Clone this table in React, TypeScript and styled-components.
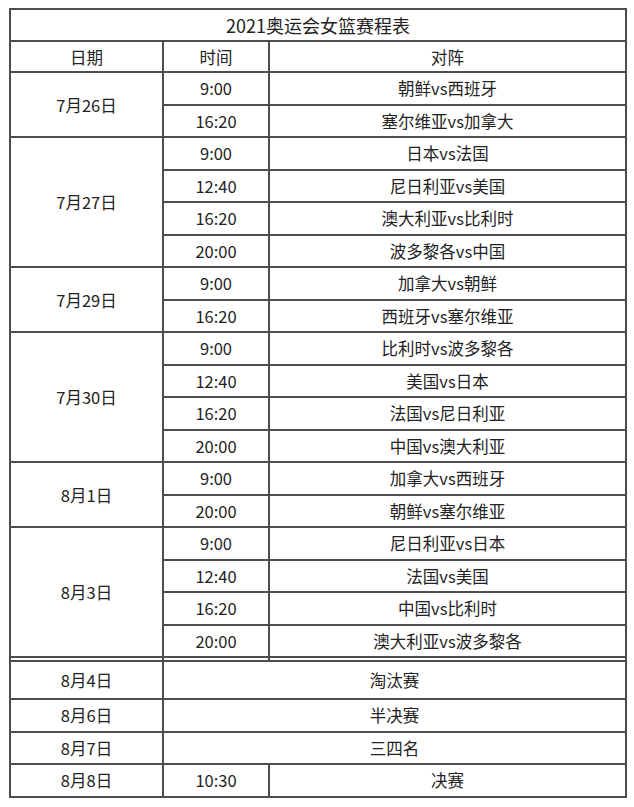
import * as React from "react";
import styled, { createGlobalStyle } from "styled-components";

const GlobalStyle = createGlobalStyle`
    html, body {
        margin: 0;
        padding: 0;
        background: #ffffff;
    }
    body {
        font-family: "Microsoft YaHei", "Noto Sans CJK SC", "Noto Sans", sans-serif;
        color: #222;
    }
`;

const Page = styled.div`
    padding: 8px 0 0 9px;
`;

const Table = styled.table`
    width: 618px;
    border-collapse: collapse;
    table-layout: fixed;
    border: 2px solid #4d4d4d;
`;

const Cell = styled.td<{ $h?: number }>`
    border: 2px solid #4d4d4d;
    padding: 0;
    height: ${(p) => p.$h ?? 30.5}px;
    text-align: center;
    vertical-align: middle;
    font-size: 16.5px;
    line-height: 20px;
    color: #222;
`;

const Title = styled(Cell)`
    font-size: 18px;
`;

const Spacer = styled.td`
    border: 2px solid #4d4d4d;
    padding: 0;
    height: 2px;
    font-size: 0;
    line-height: 0;
`;

type Day = {
    date: string;
    games: [string, string][];
};

const days: Day[] = [
    { date: "7月26日", games: [["9:00", "朝鲜vs西班牙"], ["16:20", "塞尔维亚vs加拿大"]] },
    {
        date: "7月27日",
        games: [
            ["9:00", "日本vs法国"],
            ["12:40", "尼日利亚vs美国"],
            ["16:20", "澳大利亚vs比利时"],
            ["20:00", "波多黎各vs中国"],
        ],
    },
    { date: "7月29日", games: [["9:00", "加拿大vs朝鲜"], ["16:20", "西班牙vs塞尔维亚"]] },
    {
        date: "7月30日",
        games: [
            ["9:00", "比利时vs波多黎各"],
            ["12:40", "美国vs日本"],
            ["16:20", "法国vs尼日利亚"],
            ["20:00", "中国vs澳大利亚"],
        ],
    },
    { date: "8月1日", games: [["9:00", "加拿大vs西班牙"], ["20:00", "朝鲜vs塞尔维亚"]] },
    {
        date: "8月3日",
        games: [
            ["9:00", "尼日利亚vs日本"],
            ["12:40", "法国vs美国"],
            ["16:20", "中国vs比利时"],
            ["20:00", "澳大利亚vs波多黎各"],
        ],
    },
];

const App: React.FC = () => {
    return (
        <Page>
            <GlobalStyle />
            <Table>
                <colgroup>
                    <col style={{ width: 153 }} />
                    <col style={{ width: 106 }} />
                    <col />
                </colgroup>
                <tbody>
                    <tr>
                        <Title colSpan={3} $h={30}>2021奥运会女篮赛程表</Title>
                    </tr>
                    <tr>
                        <Cell $h={29}>日期</Cell>
                        <Cell $h={29}>时间</Cell>
                        <Cell $h={29}>对阵</Cell>
                    </tr>
                    {days.map((day) =>
                        day.games.map(([time, match], i) => (
                            <tr key={day.date + time}>
                                {i === 0 && <Cell rowSpan={day.games.length}>{day.date}</Cell>}
                                <Cell>{time}</Cell>
                                <Cell>{match}</Cell>
                            </tr>
                        ))
                    )}
                    <tr>
                        <Spacer />
                        <Spacer />
                        <Spacer />
                    </tr>
                    <tr>
                        <Cell $h={36}>8月4日</Cell>
                        <Cell colSpan={2} $h={36}>淘汰赛</Cell>
                    </tr>
                    <tr>
                        <Cell>8月6日</Cell>
                        <Cell colSpan={2}>半决赛</Cell>
                    </tr>
                    <tr>
                        <Cell>8月7日</Cell>
                        <Cell colSpan={2}>三四名</Cell>
                    </tr>
                    <tr>
                        <Cell>8月8日</Cell>
                        <Cell>10:30</Cell>
                        <Cell>决赛</Cell>
                    </tr>
                </tbody>
            </Table>
        </Page>
    );
};

export default App;
